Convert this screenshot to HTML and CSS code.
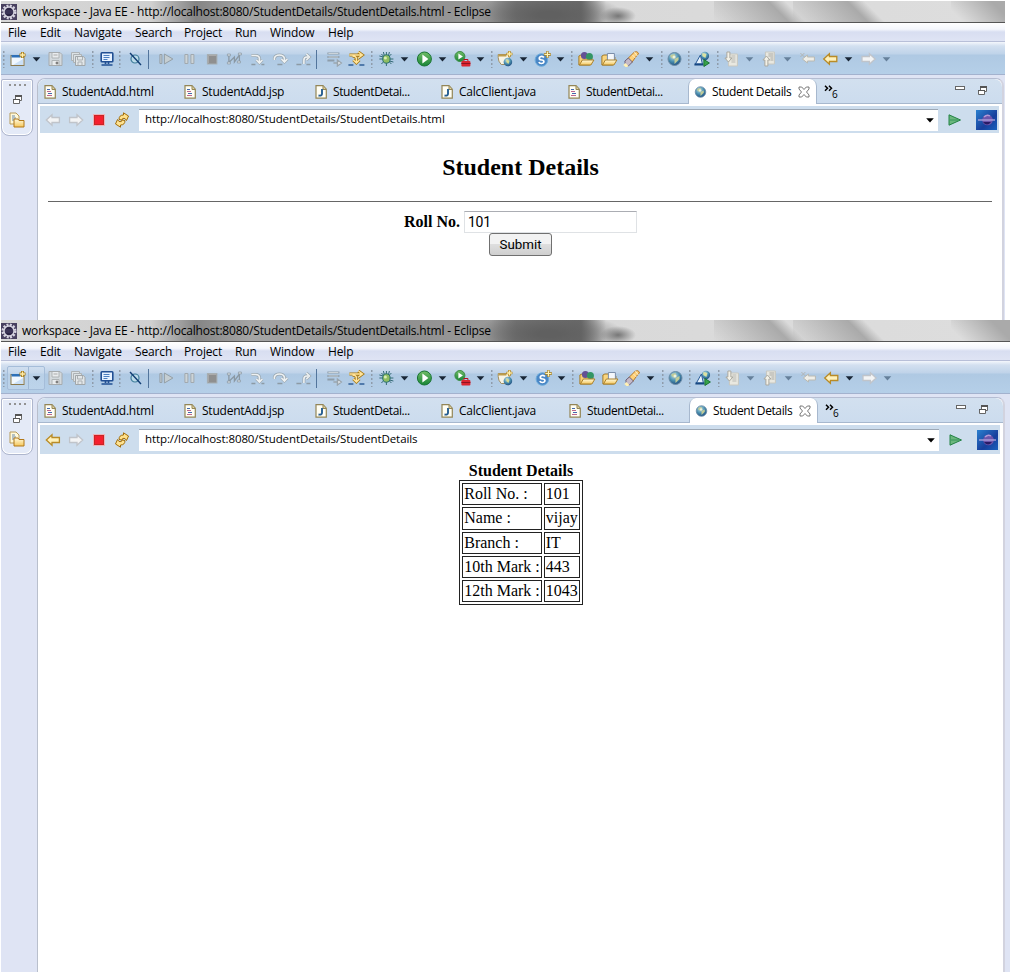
FILE: index.html
```html
<!DOCTYPE html>
<html lang="en">
<head>
<meta charset="utf-8">
<title>Student Details</title>
<link rel="stylesheet" href="styles.css">
</head>
<body>
<svg class="defs" aria-hidden="true">
  <defs>
    <linearGradient id="gold" x1="0" y1="0" x2="0" y2="1"><stop offset="0" stop-color="#fffbe0"/><stop offset="1" stop-color="#f5c65a"/></linearGradient>
    <linearGradient id="greeng" x1="0" y1="0" x2="0" y2="1"><stop offset="0" stop-color="#72bd68"/><stop offset="1" stop-color="#188536"/></linearGradient>
    <radialGradient id="earth" cx=".4" cy=".3" r=".8"><stop offset="0" stop-color="#bddce8"/><stop offset=".5" stop-color="#4a8fae"/><stop offset="1" stop-color="#173f75"/></radialGradient>
    <linearGradient id="navy" x1="0" y1="0" x2="1" y2="1"><stop offset="0" stop-color="#2b80cf"/><stop offset=".6" stop-color="#173f9c"/><stop offset="1" stop-color="#1b62be"/></linearGradient>
  </defs>
  <symbol id="logo" viewBox="0 0 16 16"><rect width="16" height="16" fill="#48405f"/><circle cx="8" cy="8" r="6.300" fill="none" stroke="#d8d5e2" stroke-width="2.400" stroke-dasharray="2 1.300"/><circle cx="8" cy="8" r="5" fill="#2b2444" stroke="#d6d4df" stroke-width="1.400"/><path d="M4 7h8M4 9h8" stroke="#4c4468"/></symbol>
  <symbol id="new" viewBox="0 0 16 16"><rect x="1" y="4.500" width="13" height="10" fill="#f1f8ff" stroke="#8c7a4d"/><rect x="1.500" y="4" width="9" height="2.500" fill="#2d70b8"/><path d="M3 14L13 8v6z" fill="#cbe0f6"/><path d="M12.500 1v6M9.500 4h6" stroke="#a57915" stroke-width="3"/><path d="M12.500 1.500v5M10 4h5" stroke="#ffedac" stroke-width="1.400"/></symbol>
  <symbol id="down" viewBox="0 0 8 5"><path d="M.2.2h7.600L4 4.500z" fill="currentColor"/></symbol>
  <symbol id="save" viewBox="0 0 16 16"><path d="M1.500 1.500h11l2 2v11h-13z" fill="#d3d9dd" stroke="#a6abae"/><path d="M4.500 2v5h7V2M4.500 14V9.500h7V14" fill="#e9ecee" stroke="#aeb3b5"/><path d="M6 4h4M8.500 11h2v2h-2z" stroke="#aaa"/></symbol>
  <symbol id="saveall" viewBox="0 0 16 16"><path d="M1.500 1.500h8v8h-8z" fill="#dce2e5" stroke="#adb2b5"/><path d="M3.500 3.500h8v8h-8z" fill="#dce2e5" stroke="#adb2b5"/><path d="M5.500 5.500h8l1.500 2v7H5.500z" fill="#e2e6e8" stroke="#a1a6a9"/><path d="M7.500 6v3h5V6M8 14v-3h4v3" fill="none" stroke="#abb0b3"/></symbol>
  <symbol id="console" viewBox="0 0 16 16"><rect x="2.700" y="1.700" width="11.600" height="9" rx=".7" fill="#e5f1ff" stroke="#214f93" stroke-width="1.600"/><path d="M5 4.500h6M5 6.500h6M5 8.500h4" stroke="#4c7fc0"/><path d="M7 11v2M10 11v2M3 14h11" stroke="#214f93" stroke-width="1.700"/></symbol>
  <symbol id="skip" viewBox="0 0 16 16"><circle cx="8" cy="8" r="4" fill="#bcdbe9" stroke="#407e9b" stroke-width="1.200"/><path d="M3 2l11 12" stroke="#123d73" stroke-width="1.400"/></symbol>
  <symbol id="resume" viewBox="0 0 16 16"><path d="M1.500 3.500h2v9h-2zM6 3l8.500 5L6 13z" fill="#c5ced2" stroke="#949fa6"/></symbol>
  <symbol id="pause" viewBox="0 0 16 16"><path d="M3.500 3.500h3v9h-3zM9.500 3.500h3v9h-3z" fill="#cdd4d7" stroke="#a1a9ae"/></symbol>
  <symbol id="halt" viewBox="0 0 16 16"><rect x="3" y="3.500" width="9.500" height="9.500" fill="#8f8f8f" stroke="#a7afb3"/><path d="M4 12V4.500H12" stroke="#ababab" fill="none"/></symbol>
  <symbol id="disconnect" viewBox="0 0 16 16"><path d="M2.500 5v7M3 11l5-5v5l5-7v6" fill="none" stroke="#8a98a3" stroke-width="1.300"/><path d="M1 3h3v2H1zM12 2h3v2h-3zM1 11h3v2H1zM11 10h3v2h-3z" fill="#d4dce1" stroke="#8a98a3" stroke-width=".7"/></symbol>
  <symbol id="into" viewBox="0 0 16 16"><path d="M2 4.500h4q4 0 4 3v4M7 9l3 3 3-3" fill="none" stroke="#9ba8b1" stroke-width="3"/><path d="M2 4.500h4q4 0 4 3v4M7 9l3 3 3-3" fill="none" stroke="#eef1f2" stroke-width="1.600"/><path d="M2 13.500h4M12 13.500h3" stroke="#8d9aa5" stroke-width="1.600"/></symbol>
  <symbol id="over" viewBox="0 0 16 16"><path d="M2 9V7q1-3 5-3t5 3v4M9 8l3 3 3-3" fill="none" stroke="#9ba8b1" stroke-width="3"/><path d="M2 9V7q1-3 5-3t5 3v4M9 8l3 3 3-3" fill="none" stroke="#eef1f2" stroke-width="1.600"/><path d="M5 13.500h5" stroke="#8d9aa5" stroke-width="1.600"/></symbol>
  <symbol id="ret" viewBox="0 0 16 16"><path d="M8.500 13V9q0-3 3-3h1M11 3l3 3-3 3" fill="none" stroke="#9ba8b1" stroke-width="3"/><path d="M8.500 13V9q0-3 3-3h1M11 3l3 3-3 3" fill="none" stroke="#eef1f2" stroke-width="1.600"/><path d="M1 13.500h5M11 13.500h4" stroke="#8d9aa5" stroke-width="1.600"/></symbol>
  <symbol id="frame" viewBox="0 0 16 16"><path d="M1 2.500h12M1 6h12M1 9.500h7" stroke="#8e9daa" stroke-width="2"/><path d="M2 2.500h10M2 6h10" stroke="#dbe1e5" stroke-width=".8"/><path d="M7 12h5M11 9l4 3-4 3z" stroke="#9aa5ad" fill="#eceff1" stroke-width="1.300"/></symbol>
  <symbol id="filter" viewBox="0 0 16 16"><path d="M1 4h12M10 1l4 3-4 3M4 5q4 0 4 3v3M5 9l3 3 3-3" fill="none" stroke="#a57610" stroke-width="3"/><path d="M1 4h12M10 1l4 3-4 3M4 5q4 0 4 3v3M5 9l3 3 3-3" fill="none" stroke="#ffe49b" stroke-width="1.500"/><path d="M0 14h5M11 14h5" stroke="#315f98" stroke-width="1.700"/></symbol>
  <symbol id="bug" viewBox="0 0 16 16"><path d="M8 1v14M1 8h14M3 3l10 10M13 3L3 13M5 1l1 4M11 1l-1 4M1 5l4 1M15 11l-4-1" stroke="#255d68" stroke-width=".9"/><ellipse cx="8" cy="8" rx="3.700" ry="4.200" fill="#8fbd62" stroke="#297170"/><circle cx="7" cy="7" r="1.500" fill="#d9edb4"/></symbol>
  <symbol id="run" viewBox="0 0 16 16"><circle cx="8" cy="8" r="7" fill="url(#greeng)" stroke="#197434"/><path d="M6 3.500l6 4.500-6 4.500z" fill="#fff"/></symbol>
  <symbol id="ext" viewBox="0 0 16 16"><circle cx="5.500" cy="5.500" r="5" fill="url(#greeng)" stroke="#3b8b43"/><path d="M4 2.500l4.500 3L4 8.500z" fill="#fff"/><rect x="7" y="10" width="9" height="5.500" rx="1" fill="#da2430"/><path d="M9.500 10V8.500h4V10" fill="none" stroke="#b70a1b"/><path d="M7 12.500h9" stroke="#8f1220"/></symbol>
  <symbol id="web" viewBox="0 0 16 16"><path d="M.8 3.500h11v10h-8q-3-3-3-7z" fill="#f8f4e5" stroke="#a28e60"/><path d="M1 4.500h8" stroke="#bd9c4a" stroke-width="2"/><circle cx="10.500" cy="11" r="4.300" fill="url(#earth)"/><path d="M9 8l3 2-1 3-2-2z" fill="#d9dc90"/><path d="M12 0v6M9 3h6" stroke="#b08014" stroke-width="2.500"/><path d="M12 .5v5M9.500 3h5" stroke="#fff0ae" stroke-width="1.300"/></symbol>
  <symbol id="servlet" viewBox="0 0 16 16"><circle cx="7" cy="9" r="6.300" fill="#4a87c6" stroke="#6eacdb"/><path d="M9.500 6.500Q8.500 5 6.500 5.500T5 8q.5 1 2.500 1t2 2q-.5 1.500-2.500 1.500T4.500 11" fill="none" stroke="#fff" stroke-width="1.700"/><path d="M13 0v7M9.500 3.500h7" stroke="#a57b16" stroke-width="2.300"/><path d="M13 .5v6M10 3.500h6" stroke="#fff3b8" stroke-width="1.200"/></symbol>
  <symbol id="opentype" viewBox="0 0 16 16"><path d="M.5 14V5l2-1h4l1 2h6v3l-2 5z" fill="#f8cf76" stroke="#a47b28"/><circle cx="6" cy="4.500" r="3.500" fill="#635195"/><circle cx="11" cy="5.500" r="3.500" fill="#329564"/><path d="M1 14l3-5h11.500l-3 5z" fill="url(#gold)" stroke="#aa812c"/></symbol>
  <symbol id="folder" viewBox="0 0 16 16"><path d="M.5 14V5l2-1h4l1 2h6v3l-2 5z" fill="#fad57e" stroke="#a47b28"/><path d="M6 2.500h7v7H6z" fill="#f4f7fb" stroke="#7c8faa"/><path d="M1 14l3-5h11.500l-3 5z" fill="url(#gold)" stroke="#aa812c"/></symbol>
  <symbol id="torch" viewBox="0 0 16 16"><path d="M4 8l7-7q3-1 4 1 0 2-2 3L8 12z" fill="#ffd178" stroke="#b77927"/><path d="M9 4l3 3M11 1l3 4" stroke="#f8eccb"/><path d="M1.500 10L5 7l4 4-4 4-3 .5z" fill="#c5bac8" stroke="#6c617b"/><path d="M1 13l3 3" stroke="#fff1b5" stroke-width="3"/></symbol>
  <symbol id="globe" viewBox="0 0 16 16"><circle cx="8" cy="8" r="6.500" fill="url(#earth)" stroke="#6b8ca6"/><path d="M4 4l4-1 1 3-2 2-3-2zM8 8l4-2v3l-4 4z" fill="#c1cc98"/><circle cx="7.500" cy="6" r="1.500" fill="#eef3dd"/></symbol>
  <symbol id="launch" viewBox="0 0 16 16"><circle cx="10.500" cy="5" r="4.200" fill="url(#earth)"/><path d="M8 2l4 1-1 4-3-2z" fill="#dce2a0"/><path d="M1 13L6 4l2 9z" fill="#e8f3fc" stroke="#295b98"/><path d="M0 13.500h9" stroke="#174883" stroke-width="2"/><path d="M9.500 8.500l5.500 3.500-5.500 3.500z" fill="#38a348" stroke="#1b7335"/></symbol>
  <symbol id="next" viewBox="0 0 16 16"><path d="M5 3h9v12H5z" fill="#e9e8e0" stroke="#c8c8c0"/><path d="M8 5h4M8 7h4M8 9h4M8 11h4" stroke="#b9b9b4"/><path d="M3.500 1h3v6h2L5 11 1.500 7h2z" fill="#f3f1e7" stroke="#aaa9a0"/></symbol>
  <symbol id="prev" viewBox="0 0 16 16"><path d="M4 1h9v12H4z" fill="#e9e8e0" stroke="#c8c8c0"/><path d="M7 3h5M7 5h5M9 7h3M9 9h3" stroke="#a9a9a4"/><path d="M3.500 15V9h-2L5 5l3.500 4h-2v6z" fill="#f3f1e7" stroke="#aaa9a0"/></symbol>
  <symbol id="last" viewBox="0 0 16 16"><path d="M3 8l5-4v2h7v4H8v2z" fill="#efeee8" stroke="#b9b9b2"/><path d="M1 2l4 4M5 2L1 6" stroke="#b2b6b6"/></symbol>
  <symbol id="left" viewBox="0 0 16 16"><path d="M1.300 8L7 2.700v2.800h7.400v5H7v2.800z" fill="var(--arrow-fill)" stroke="var(--arrow-line)" stroke-width="1.300"/></symbol>
  <symbol id="right" viewBox="0 0 16 16"><path d="M14.700 8L9 2.700v2.800H1.600v5H9v2.800z" fill="var(--arrow-fill)" stroke="var(--arrow-line)" stroke-width="1.300"/></symbol>
  <symbol id="page" viewBox="0 0 13 14"><path d="M1 .7h7l3.300 3.500v9H1z" fill="#fffef4" stroke="#938556" stroke-width="1.200"/><path d="M8 1v3.500h3" fill="#e0d39c" stroke="#938556"/><path d="M3 4.500h3M4 8.500h4" stroke="#4169af"/><path d="M3 6.500h4M3 10.500h5" stroke="#bd6790"/></symbol>
  <symbol id="java" viewBox="0 0 13 14"><path d="M1 .7h7l3.300 3.500v9H1z" fill="#fffef4" stroke="#938556" stroke-width="1.200"/><path d="M8 1v3.500h3" fill="#e0d39c" stroke="#938556"/><path d="M7 4v5q0 2-3.500 1.500" fill="none" stroke="#255d91" stroke-width="1.900"/></symbol>
  <symbol id="close" viewBox="0 0 12 12"><path d="M1 1h2.700L6 3.500 8.300 1H11v2L8.500 6 11 9v2H8.300L6 8.500 3.700 11H1V9l2.500-3L1 3z" fill="#fff" stroke="#696969" stroke-width=".9"/></symbol>
  <symbol id="restore" viewBox="0 0 9 9"><path d="M2.500 1.500h6v4h-6z" fill="#fff" stroke="#666"/><path d="M2 1h7" stroke="#555" stroke-width="2"/><path d="M.5 4.500h6v4h-6z" fill="#fff" stroke="#666"/><path d="M0 4.500h7" stroke="#555"/></symbol>
  <symbol id="chevrons" viewBox="0 0 9 7"><path d="M1 .7l2.500 2.500L1 5.700M5 .7l2.500 2.500L5 5.700" fill="none" stroke="#000" stroke-width="1.500"/></symbol>
  <symbol id="explorer" viewBox="0 0 16 16"><path d="M1 1h6l3 3v8H1z" fill="#fff9da" stroke="#b79a59"/><path d="M3 4h3M3 6h4M3 8h2" stroke="#6988ad"/><path d="M5 7h4l1 1.500h5V15H5z" fill="url(#gold)" stroke="#b27819"/></symbol>
  <symbol id="refresh" viewBox="0 0 16 16"><path d="M5 7.500Q5 3 9.500 3V.8L14.500 4l-2 4.500L11 6.500Q8 5.500 8 8z" fill="#ffe08a" stroke="#a26d0a"/><path d="M11 8.500q0 4.500-4.500 4.500v2.200L1.500 12l2-4.500L5 9.500q3 1 3-1.500z" fill="#ffe391" stroke="#a26d0a"/></symbol>
  <symbol id="go" viewBox="0 0 14 12"><path d="M1 .8L12.500 6 1 11.200z" fill="#6bb77d" stroke="#238244"/><path d="M2 6h8" stroke="#36945a"/></symbol>
  <symbol id="orb" viewBox="0 0 21 20"><rect width="21" height="20" fill="url(#navy)"/><circle cx="11.500" cy="10" r="5.300" fill="#6d55ac"/><path d="M8 7q3-3 6-1" stroke="#b398d5" stroke-width="1.500" fill="none"/><path d="M7 12q4 5 8 0z" fill="#291b65"/><path d="M2 10h17" stroke="#b1a5dd" stroke-width="1.300"/></symbol>
</svg>

<section class="window first">
  <header class="titlebar"><svg class="logo"><use href="#logo"/></svg><span class="caption">workspace - Java EE - http://localhost:8080/StudentDetails/StudentDetails.html - Eclipse</span></header>
  <nav class="menubar"><span class="m-file">File</span><span class="m-edit">Edit</span><span class="m-nav">Navigate</span><span class="m-search">Search</span><span class="m-project">Project</span><span class="m-run">Run</span><span class="m-window">Window</span><span>Help</span></nav>
  <div class="toolbar">
    <i class="sep"></i><span class="split create"><svg><use href="#new"/></svg><svg class="down"><use href="#down"/></svg></span>
    <svg class="snug"><use href="#save"/></svg><svg class="wide"><use href="#saveall"/></svg><i class="sep"></i>
    <svg class="snug"><use href="#console"/></svg><i class="sep"></i><svg class="wide"><use href="#skip"/></svg><i class="bar"></i>
    <svg><use href="#resume"/></svg><svg><use href="#pause"/></svg><svg><use href="#halt"/></svg><svg><use href="#disconnect"/></svg><svg><use href="#into"/></svg><svg><use href="#over"/></svg><svg><use href="#ret"/></svg><i class="bar"></i>
    <svg><use href="#frame"/></svg><svg><use href="#filter"/></svg><i class="sep broad"></i>
    <span class="split"><svg><use href="#bug"/></svg><svg class="down"><use href="#down"/></svg></span>
    <span class="split"><svg><use href="#run"/></svg><svg class="down"><use href="#down"/></svg></span>
    <span class="split"><svg><use href="#ext"/></svg><svg class="down"><use href="#down"/></svg></span><i class="sep narrow"></i>
    <span class="split web"><svg><use href="#web"/></svg><svg class="down"><use href="#down"/></svg></span>
    <span class="split"><svg><use href="#servlet"/></svg><svg class="down"><use href="#down"/></svg></span><i class="sep narrow"></i>
    <svg><use href="#opentype"/></svg><svg><use href="#folder"/></svg><span class="split"><svg><use href="#torch"/></svg><svg class="down"><use href="#down"/></svg></span><i class="sep"></i>
    <svg class="snug"><use href="#globe"/></svg><i class="sep"></i><svg><use href="#launch"/></svg><i class="sep"></i>
    <span class="split dim"><svg><use href="#next"/></svg><svg class="down"><use href="#down"/></svg></span>
    <span class="split dim"><svg><use href="#prev"/></svg><svg class="down"><use href="#down"/></svg></span>
    <svg><use href="#last"/></svg>
    <span class="split gold"><svg><use href="#left"/></svg><svg class="down"><use href="#down"/></svg></span>
    <span class="split dim"><svg><use href="#right"/></svg><svg class="down"><use href="#down"/></svg></span>
  </div>
  <div class="workbench">
    <aside><div class="fastview"><i class="grip"></i><svg class="restore"><use href="#restore"/></svg><svg class="explorer"><use href="#explorer"/></svg></div></aside>
    <main class="editor">
      <div class="tabs">
        <div class="tab t1"><svg><use href="#page"/></svg><span>StudentAdd.html</span></div>
        <div class="tab t2"><svg><use href="#page"/></svg><span>StudentAdd.jsp</span></div>
        <div class="tab t3"><svg><use href="#java"/></svg><span>StudentDetai...</span></div>
        <div class="tab t4"><svg><use href="#java"/></svg><span>CalcClient.java</span></div>
        <div class="tab t5"><svg><use href="#page"/></svg><span>StudentDetai...</span></div>
        <div class="tab active"><svg><use href="#globe"/></svg><span>Student Details</span><svg class="close"><use href="#close"/></svg></div>
        <div class="more"><svg><use href="#chevrons"/></svg><small>6</small></div>
        <div class="controls"><i class="min"></i><svg class="restore"><use href="#restore"/></svg></div>
      </div>
      <div class="address">
        <svg class="dim"><use href="#left"/></svg><svg class="dim"><use href="#right"/></svg><i class="stop"></i><svg><use href="#refresh"/></svg>
        <div class="url"><span>http://localhost:8080/StudentDetails/StudentDetails.html</span><svg class="down"><use href="#down"/></svg></div>
        <svg class="go"><use href="#go"/></svg><svg class="orb"><use href="#orb"/></svg>
      </div>
      <div class="page form-page">
        <h2>Student Details</h2>
        <hr>
        <form><label class="field"><b>Roll No.</b><input type="text" value="101"></label><button type="button">Submit</button></form>
      </div>
    </main>
  </div>
</section>

<section class="window second">
  <header class="titlebar"><svg class="logo"><use href="#logo"/></svg><span class="caption">workspace - Java EE - http://localhost:8080/StudentDetails/StudentDetails.html - Eclipse</span></header>
  <nav class="menubar"><span class="m-file">File</span><span class="m-edit">Edit</span><span class="m-nav">Navigate</span><span class="m-search">Search</span><span class="m-project">Project</span><span class="m-run">Run</span><span class="m-window">Window</span><span>Help</span></nav>
  <div class="toolbar">
    <i class="sep"></i><span class="split create hover"><svg><use href="#new"/></svg><svg class="down"><use href="#down"/></svg></span>
    <svg class="snug"><use href="#save"/></svg><svg class="wide"><use href="#saveall"/></svg><i class="sep"></i>
    <svg class="snug"><use href="#console"/></svg><i class="sep"></i><svg class="wide"><use href="#skip"/></svg><i class="bar"></i>
    <svg><use href="#resume"/></svg><svg><use href="#pause"/></svg><svg><use href="#halt"/></svg><svg><use href="#disconnect"/></svg><svg><use href="#into"/></svg><svg><use href="#over"/></svg><svg><use href="#ret"/></svg><i class="bar"></i>
    <svg><use href="#frame"/></svg><svg><use href="#filter"/></svg><i class="sep broad"></i>
    <span class="split"><svg><use href="#bug"/></svg><svg class="down"><use href="#down"/></svg></span>
    <span class="split"><svg><use href="#run"/></svg><svg class="down"><use href="#down"/></svg></span>
    <span class="split"><svg><use href="#ext"/></svg><svg class="down"><use href="#down"/></svg></span><i class="sep narrow"></i>
    <span class="split"><svg><use href="#web"/></svg><svg class="down"><use href="#down"/></svg></span>
    <span class="split"><svg><use href="#servlet"/></svg><svg class="down"><use href="#down"/></svg></span><i class="sep narrow"></i>
    <svg><use href="#opentype"/></svg><svg><use href="#folder"/></svg><span class="split"><svg><use href="#torch"/></svg><svg class="down"><use href="#down"/></svg></span><i class="sep"></i>
    <svg class="snug"><use href="#globe"/></svg><i class="sep"></i><svg><use href="#launch"/></svg><i class="sep"></i>
    <span class="split dim"><svg><use href="#next"/></svg><svg class="down"><use href="#down"/></svg></span>
    <span class="split dim"><svg><use href="#prev"/></svg><svg class="down"><use href="#down"/></svg></span>
    <svg><use href="#last"/></svg>
    <span class="split gold"><svg><use href="#left"/></svg><svg class="down"><use href="#down"/></svg></span>
    <span class="split dim"><svg><use href="#right"/></svg><svg class="down"><use href="#down"/></svg></span>
  </div>
  <div class="workbench">
    <aside><div class="fastview"><i class="grip"></i><svg class="restore"><use href="#restore"/></svg><svg class="explorer"><use href="#explorer"/></svg></div></aside>
    <main class="editor">
      <div class="tabs">
        <div class="tab t1"><svg><use href="#page"/></svg><span>StudentAdd.html</span></div>
        <div class="tab t2"><svg><use href="#page"/></svg><span>StudentAdd.jsp</span></div>
        <div class="tab t3"><svg><use href="#java"/></svg><span>StudentDetai...</span></div>
        <div class="tab t4"><svg><use href="#java"/></svg><span>CalcClient.java</span></div>
        <div class="tab t5"><svg><use href="#page"/></svg><span>StudentDetai...</span></div>
        <div class="tab active"><svg><use href="#globe"/></svg><span>Student Details</span><svg class="close"><use href="#close"/></svg></div>
        <div class="more"><svg><use href="#chevrons"/></svg><small>6</small></div>
        <div class="controls"><i class="min"></i><svg class="restore"><use href="#restore"/></svg></div>
      </div>
      <div class="address">
        <svg class="gold"><use href="#left"/></svg><svg class="dim"><use href="#right"/></svg><i class="stop"></i><svg><use href="#refresh"/></svg>
        <div class="url"><span>http://localhost:8080/StudentDetails/StudentDetails</span><svg class="down"><use href="#down"/></svg></div>
        <svg class="go"><use href="#go"/></svg><svg class="orb"><use href="#orb"/></svg>
      </div>
      <div class="page result-page">
        <b>Student Details</b>
        <table>
          <tr><td>Roll No. :</td><td>101</td></tr>
          <tr><td>Name :</td><td>vijay</td></tr>
          <tr><td>Branch :</td><td>IT</td></tr>
          <tr><td>10th Mark :</td><td>443</td></tr>
          <tr><td>12th Mark :</td><td>1043</td></tr>
        </table>
      </div>
    </main>
  </div>
</section>
</body>
</html>
```

FILE: styles.css
```css
* { box-sizing: border-box; }
body { margin: 0; padding: 1px 0 0 1px; height: 972px; overflow: hidden; background: #fff; color: #000; font: 12px/16px "Open Sans", "Noto Sans", sans-serif; }
.defs { position: absolute; width: 0; height: 0; }
svg { display: block; flex: none; width: 16px; height: 16px; overflow: visible; }
.window { display: flex; flex-direction: column; overflow: hidden; background: #dfe4f4; white-space: nowrap; }
.first { width: 1004px; height: 319px; }
.second { width: 1009px; height: 652px; }

.titlebar { display: flex; align-items: center; flex: none; height: 22px; padding-top: 1px; border-bottom: 1px solid #555;
  background:
    radial-gradient(ellipse 18px 9px at 617px 15px, #777 0, #7770 100%),
    radial-gradient(ellipse 75px 22px at 548px 14px, #606060 0 15%, #7770 100%),
    linear-gradient(45deg, #aaa0 0%, #aaa 62%, #aaa0 76%) 713px 0 / 100px 21px no-repeat,
    linear-gradient(45deg, #aaa0 0%, #aaa 62%, #aaa0 76%) 792px 0 / 100px 21px no-repeat,
    linear-gradient(45deg, #aaa0 15%, #aaa 75%) 950px 0 / 60px 21px no-repeat,
    linear-gradient(90deg, #d8d8d8 0, #d0d0d0 150px, #858585 195px, #a5a5a5 250px, #909090 400px, #999 490px, #777 515px, #6b6b6b 580px, #d9d9d9 605px, #ddd 970px);
}
.logo { margin-right: 5px; }
.caption { letter-spacing: -.19px; }

.menubar { display: flex; flex: none; height: 19px; padding: 2px 0 0 7px; background: linear-gradient(#fff 0, #f4f6fc 35%, #d8def1 50%, #dfe4f4 100%); border-bottom: 1px solid #b8bfd8; letter-spacing: -.15px; }
.m-file { width: 32px; } .m-edit { width: 34px; } .m-nav { width: 61px; } .m-search { width: 49px; }
.m-project { width: 51px; } .m-run { width: 35px; } .m-window { width: 58px; }

.toolbar { display: flex; align-items: center; flex: none; height: 33px; padding-top: 2px; border-bottom: 1px solid #a3b2ce; background: linear-gradient(#f4f7fc 0, #d3e0f0 4px, #bfd3e9 12px, #afc9e3 13px, #b5cfe8 100%); }
.toolbar > svg, .split > svg:first-child { width: 22.800px; }
.toolbar > svg.wide { width: 24px; }
.toolbar > svg.snug { width: 21px; }
.split { display: flex; align-items: center; width: 38px; color: #192636; }
.split > .down { width: 15px; height: 5px; padding-right: 2px; }
.web { width: 37px; }
.create { height: 24px; }
.create > svg:first-child { width: 22px; }
.create > .down { margin-left: 1px; }
.hover { border: 1px solid #a5bdd9; border-radius: 2px; background: linear-gradient(90deg, #d5e4f344 20px, #9fb8d4 20px 21px, #d5e4f344 21px); }
.hover > svg:first-child { margin-left: -1px; }
.dim { color: #66809b; --arrow-fill: #f3f4f5; --arrow-line: #c0c4ca; }
.gold { --arrow-fill: #fff1ba; --arrow-line: #b98b26; }
.sep { flex: none; width: 6px; height: 17px; background: repeating-linear-gradient(#8f9cab 0 2px, #b5cfe800 2px 4px) center / 1.500px 100% no-repeat; }
.narrow { width: 5.500px; }
.broad { width: 6.700px; }
.bar { flex: none; width: 8px; height: 19px; background: linear-gradient(#53759c, #53759c) 1px 0 / 1px 100% no-repeat; }

.workbench { display: flex; flex: 1; min-height: 0; padding-top: 3px; }
aside { flex: none; width: 36px; }
.fastview { display: flex; flex-direction: column; align-items: center; width: 32px; height: 57px; margin-top: 1px; padding-top: 4px; border: 1px solid #aeb6cd; border-radius: 2px 2px 8px 8px; background: #e4eaf7; box-shadow: inset 0 0 0 1px #fff; }
.grip { width: 17px; height: 2px; margin-bottom: 9px; background: repeating-linear-gradient(90deg, #929292 0 2px, #0000 2px 5px); }
.restore { width: 9px; height: 9px; }
.explorer { margin-top: 8px; }
.editor { display: flex; flex-direction: column; width: 967px; border: solid #b5bdd2; border-width: 1px 2px 0 1px; border-color: #b5bdd2 #d2d3df #b5bdd2 #b9bfcc; border-radius: 8px 8px 0 0; background: #fff; }
.second .editor { width: 968px; }
.tabs { display: flex; flex: none; height: 25px; padding-left: 6px; background: linear-gradient(#d2e0ef, #ccdcee); border-radius: 8px 8px 0 0; border-bottom: 1px solid #a7b8ce; letter-spacing: -.23px; }
.tab { display: flex; align-items: center; flex: none; gap: 5px; padding-top: 1px; }
.tab > svg:first-child { width: 13px; height: 14px; }
.t1 { width: 140px; } .t2 { width: 131px; } .t3 { width: 126px; } .t4 { width: 127px; } .t5 { width: 120px; }
.t3, .t5 { letter-spacing: -.4px; }
.second .t4 { width: 128px; }
.tab.active { width: 129px; height: 25px; padding-left: 5px; border: solid #a7b8ce; border-width: 0 1px; border-radius: 7px 7px 0 0; background: #fff; letter-spacing: -.4px; }
.close { width: 12px; height: 12px; margin-left: 2px; }
.more { display: flex; margin-left: 7px; padding-top: 6px; }
.more svg { width: 9px; height: 7px; }
.more small { font-size: 10px; line-height: 18px; margin-left: -1px; }
.controls { display: flex; gap: 13px; margin: 7px 15px 0 auto; }
.min { width: 10px; height: 4px; border: 1px solid #666; background: #fff; }
.address { display: flex; align-items: center; flex: none; height: 27px; margin: 2px 3px 0 2px; padding: 0 2px 0 5px; background: #cddded; }
.second .address { height: 29px; }
.address > svg { margin-right: 7px; }
.stop { width: 10px; height: 10px; margin: 0 10px 0 3px; border: 1px solid #c52626; outline: 1px solid #f3b1b7; background: #f51f2e; }
.address > svg:nth-child(4) { margin-right: 9px; }
.url { display: flex; align-items: center; justify-content: space-between; flex: 1; height: 22px; padding: 0 4px 2px 6px; background: #fff; border-top: 1px solid #9da8b5; font-size: 11.500px; letter-spacing: -.09px; }
.url .down { width: 8px; height: 5px; margin-top: 2px; }
.address > .go { width: 14px; height: 12px; margin: 0 14px 0 10px; }
.address > .orb { width: 21px; height: 20px; margin: 0; }

.page { font: 16px/18px "Liberation Serif", serif; text-align: center; }
.form-page { padding-left: 1px; }
h2 { margin: 21px 0 20px; font-size: 24px; line-height: 27px; }
hr { height: 1px; margin: 0 10px 0 9px; border: 0; background: #666; }
form { display: flex; flex-direction: column; align-items: center; padding-top: 9px; }
.field { display: flex; align-items: center; gap: 4px; }
input { width: 173px; height: 22px; padding: 1px 3px; border: 1px solid #dfe2e5; border-top-color: #abadb3; font: 14px Roboto, sans-serif; letter-spacing: -.3px; }
button { width: 63px; height: 23px; padding: 0; border: 1px solid #707070; border-radius: 3px; background: linear-gradient(#f2f2f2 0 48%, #dedede 50%, #cfcfcf); font: 13.333px Roboto, sans-serif; color: #000; }
.result-page { display: flex; flex-direction: column; align-items: center; padding: 8px 0 0 1px; }
table { border: 1px solid #222; border-spacing: 2px; text-align: left; }
td { height: 22.300px; padding: 1px; border: 1px solid #222; line-height: 18px; }
```
